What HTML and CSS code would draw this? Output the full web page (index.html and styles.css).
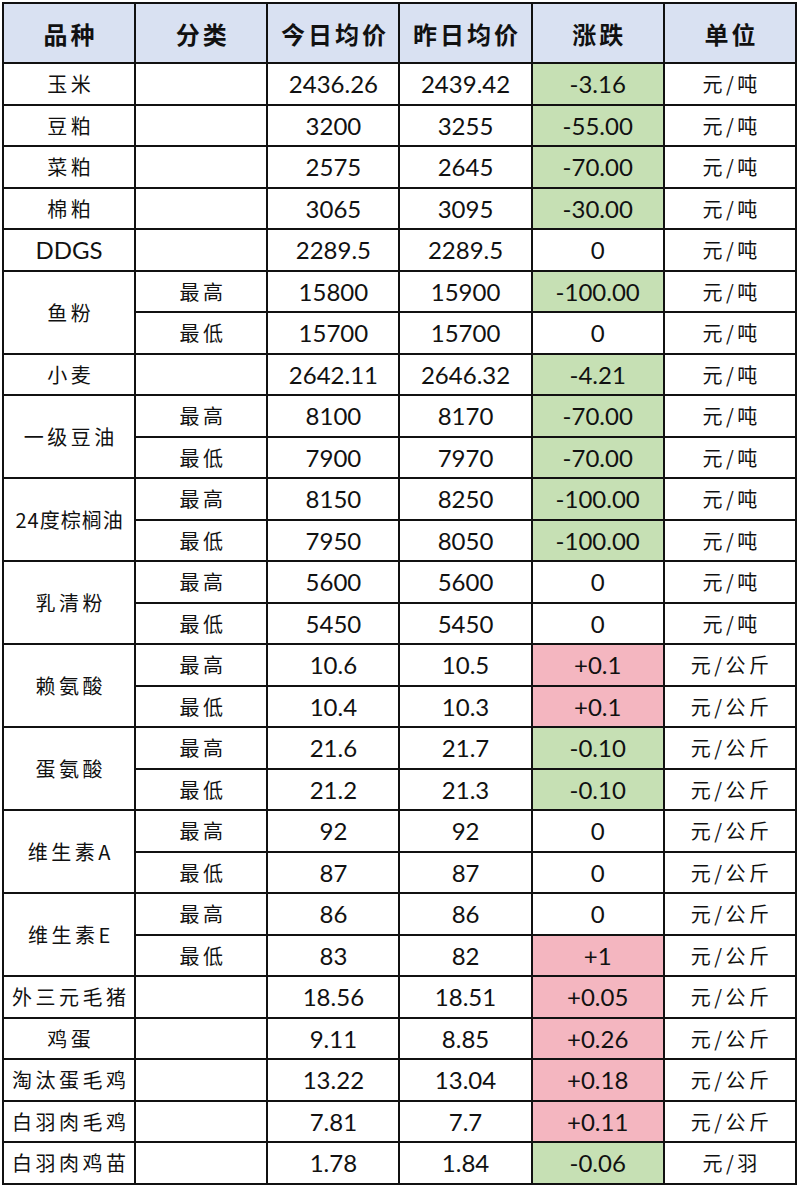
FILE: index.html
```html
<!DOCTYPE html>
<html lang="zh">
<head>
<meta charset="utf-8">
<link rel="stylesheet" href="styles.css">
</head>
<body>
<table class="price-table">
  <colgroup>
    <col class="c"><col class="c"><col class="c"><col class="c"><col class="c"><col class="c">
  </colgroup>
  <thead>
    <tr class="head">
      <th>品种</th><th>分类</th><th>今日均价</th><th>昨日均价</th><th>涨跌</th><th>单位</th>
    </tr>
  </thead>
  <tbody>
    <tr><td class="cn">玉米</td><td></td><td class="num">2436.26</td><td class="num">2439.42</td><td class="num down">-3.16</td><td class="cn">元/吨</td></tr>
    <tr><td class="cn">豆粕</td><td></td><td class="num">3200</td><td class="num">3255</td><td class="num down">-55.00</td><td class="cn">元/吨</td></tr>
    <tr><td class="cn">菜粕</td><td></td><td class="num">2575</td><td class="num">2645</td><td class="num down">-70.00</td><td class="cn">元/吨</td></tr>
    <tr><td class="cn">棉粕</td><td></td><td class="num">3065</td><td class="num">3095</td><td class="num down">-30.00</td><td class="cn">元/吨</td></tr>
    <tr><td class="num">DDGS</td><td></td><td class="num">2289.5</td><td class="num">2289.5</td><td class="num">0</td><td class="cn">元/吨</td></tr>
    <tr><td class="cn" rowspan="2">鱼粉</td><td class="cn">最高</td><td class="num">15800</td><td class="num">15900</td><td class="num down">-100.00</td><td class="cn">元/吨</td></tr>
    <tr><td class="cn">最低</td><td class="num">15700</td><td class="num">15700</td><td class="num">0</td><td class="cn">元/吨</td></tr>
    <tr><td class="cn">小麦</td><td></td><td class="num">2642.11</td><td class="num">2646.32</td><td class="num down">-4.21</td><td class="cn">元/吨</td></tr>
    <tr><td class="cn" rowspan="2">一级豆油</td><td class="cn">最高</td><td class="num">8100</td><td class="num">8170</td><td class="num down">-70.00</td><td class="cn">元/吨</td></tr>
    <tr><td class="cn">最低</td><td class="num">7900</td><td class="num">7970</td><td class="num down">-70.00</td><td class="cn">元/吨</td></tr>
    <tr><td class="cn tight" rowspan="2">24度棕榈油</td><td class="cn">最高</td><td class="num">8150</td><td class="num">8250</td><td class="num down">-100.00</td><td class="cn">元/吨</td></tr>
    <tr><td class="cn">最低</td><td class="num">7950</td><td class="num">8050</td><td class="num down">-100.00</td><td class="cn">元/吨</td></tr>
    <tr><td class="cn" rowspan="2">乳清粉</td><td class="cn">最高</td><td class="num">5600</td><td class="num">5600</td><td class="num">0</td><td class="cn">元/吨</td></tr>
    <tr><td class="cn">最低</td><td class="num">5450</td><td class="num">5450</td><td class="num">0</td><td class="cn">元/吨</td></tr>
    <tr><td class="cn" rowspan="2">赖氨酸</td><td class="cn">最高</td><td class="num">10.6</td><td class="num">10.5</td><td class="num up">+0.1</td><td class="cn">元/公斤</td></tr>
    <tr><td class="cn">最低</td><td class="num">10.4</td><td class="num">10.3</td><td class="num up">+0.1</td><td class="cn">元/公斤</td></tr>
    <tr><td class="cn" rowspan="2">蛋氨酸</td><td class="cn">最高</td><td class="num">21.6</td><td class="num">21.7</td><td class="num down">-0.10</td><td class="cn">元/公斤</td></tr>
    <tr><td class="cn">最低</td><td class="num">21.2</td><td class="num">21.3</td><td class="num down">-0.10</td><td class="cn">元/公斤</td></tr>
    <tr><td class="cn" rowspan="2">维生素A</td><td class="cn">最高</td><td class="num">92</td><td class="num">92</td><td class="num">0</td><td class="cn">元/公斤</td></tr>
    <tr><td class="cn">最低</td><td class="num">87</td><td class="num">87</td><td class="num">0</td><td class="cn">元/公斤</td></tr>
    <tr><td class="cn" rowspan="2">维生素E</td><td class="cn">最高</td><td class="num">86</td><td class="num">86</td><td class="num">0</td><td class="cn">元/公斤</td></tr>
    <tr><td class="cn">最低</td><td class="num">83</td><td class="num">82</td><td class="num up">+1</td><td class="cn">元/公斤</td></tr>
    <tr><td class="cn">外三元毛猪</td><td></td><td class="num">18.56</td><td class="num">18.51</td><td class="num up">+0.05</td><td class="cn">元/公斤</td></tr>
    <tr><td class="cn">鸡蛋</td><td></td><td class="num">9.11</td><td class="num">8.85</td><td class="num up">+0.26</td><td class="cn">元/公斤</td></tr>
    <tr><td class="cn">淘汰蛋毛鸡</td><td></td><td class="num">13.22</td><td class="num">13.04</td><td class="num up">+0.18</td><td class="cn">元/公斤</td></tr>
    <tr><td class="cn">白羽肉毛鸡</td><td></td><td class="num">7.81</td><td class="num">7.7</td><td class="num up">+0.11</td><td class="cn">元/公斤</td></tr>
    <tr><td class="cn">白羽肉鸡苗</td><td></td><td class="num">1.78</td><td class="num">1.84</td><td class="num down">-0.06</td><td class="cn">元/羽</td></tr>
  </tbody>
</table>
</body>
</html>
```

FILE: styles.css
```css
html, body {
  margin: 0;
  padding: 0;
  background: #ffffff;
}

.price-table {
  margin: 2px 0 0 2px;
  width: 795px;
  table-layout: fixed;
  border-collapse: collapse;
  color: #111;
}

.price-table th,
.price-table td {
  border: 2px solid #111;
  padding: 0;
  text-align: center;
  vertical-align: middle;
  white-space: nowrap;
  overflow: hidden;
}

.head th {
  height: 58px;
  background: #d9e1f2;
  font-family: "Noto Sans CJK SC", sans-serif;
  font-weight: 700;
  font-size: 24px;
  letter-spacing: 3px;
  text-indent: 3px;
}

.price-table tbody tr {
  height: 41.5px;
}

.cn {
  font-family: "Noto Sans CJK SC", sans-serif;
  font-weight: 400;
  font-size: 20px;
  letter-spacing: 3.5px;
  text-indent: 3.5px;
}

.cn.tight {
  letter-spacing: 1px;
  text-indent: 1px;
}

.num {
  font-family: Lato, "Noto Sans", sans-serif;
  font-size: 24px;
}

.down {
  background: #c6e0b4;
}

.up {
  background: #f4b6c0;
}
```
